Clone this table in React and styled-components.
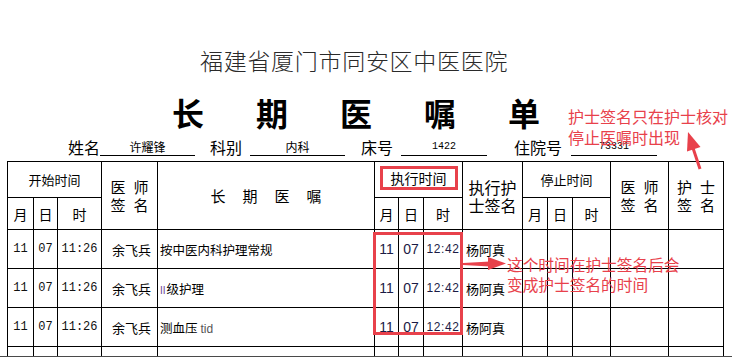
import React from 'react';
import styled, { createGlobalStyle } from 'styled-components';

const Global = createGlobalStyle`
  html, body { margin: 0; padding: 0; background: #fff; }
  body { font-family: "Noto Sans CJK SC", "Noto Sans", sans-serif; color: #000; }
`;

const RED = '#e8414b';

const Page = styled.div`
  position: relative;
  width: 732px;
  height: 357px;
  overflow: hidden;
  display: flex;
  flex-direction: column;
`;

const Hospital = styled.div`
  margin-top: 48px;
  padding-left: 200px;
  height: 24px;
  font-size: 23px;
  font-weight: 300;
  line-height: 24px;
  letter-spacing: 0.7px;
  color: #2a2a2a;
  white-space: nowrap;
`;

const MainTitle = styled.h1`
  margin: 20px 0 0;
  padding-left: 172px;
  height: 40px;
  font-size: 32px;
  line-height: 40px;
  font-weight: 700;
  letter-spacing: 52px;
  white-space: nowrap;
`;

const InfoRow = styled.div`
  margin-top: 6px;
  height: 19px;
  display: flex;
  align-items: flex-end;
  padding-left: 68px;
`;

const Label = styled.span`
  flex: none;
  width: ${p => p.$w}px;
  margin-left: ${p => p.$ml || 0}px;
  font-size: 16px;
  line-height: 19px;
  white-space: nowrap;
`;

const Field = styled.span`
  flex: none;
  box-sizing: border-box;
  width: ${p => p.$w}px;
  margin-left: ${p => p.$ml || 0}px;
  margin-bottom: 1px;
  height: 16px;
  border-bottom: 1px solid #000;
  text-align: center;
  font-family: ${p => (p.$mono ? '"Liberation Mono", monospace' : '"Noto Sans CJK SC", sans-serif')};
  font-size: ${p => (p.$mono ? 10 : 12)}px;
  line-height: 14px;
  white-space: nowrap;
`;

const TableWrap = styled.div`
  position: relative;
  margin: 4px 0 0 7px;
  width: 717px;
`;

const Sheet = styled.table`
  border-collapse: collapse;
  table-layout: fixed;
  width: 717px;
`;

const Row = styled.tr`
  height: ${p => p.$h}px;
`;

const Head = styled.th`
  border: 1px solid #000;
  padding: 0;
  font-weight: 400;
  font-size: ${p => p.$size || 14}px;
  line-height: 18px;
  text-align: center;
  vertical-align: middle;
  white-space: nowrap;
`;

const Cell = styled.td`
  border: 1px solid #000;
  border-bottom: ${p => (p.$open ? 'none' : '1px solid #000')};
  padding: 0;
  vertical-align: middle;
  white-space: nowrap;
  overflow: hidden;
`;

const Digits = styled(Cell)`
  text-align: center;
  font-family: "Liberation Mono", "DejaVu Sans Mono", monospace;
  font-size: 12px;
  color: #111;
`;

const Signer = styled(Cell)`
  text-align: right;
  padding-right: 6px;
  font-size: 13px;
`;

const Order = styled(Cell)`
  text-align: left;
  padding-left: 2px;
  font-size: 12.5px;
`;

const ExecNum = styled(Cell)`
  text-align: center;
  font-family: "Liberation Sans", Arial, sans-serif;
  font-size: ${p => (p.$small ? 12 : 14)}px;
  letter-spacing: ${p => (p.$small ? 0.6 : 0)}px;
  color: #1b1b45;
`;

const Nurse = styled(Cell)`
  text-align: left;
  padding-left: 3px;
  font-size: 13px;
`;

const Stack = styled.div`
  display: flex;
  flex-direction: column;
  align-items: center;
  letter-spacing: ${p => p.$ls || 0}px;
  padding-left: ${p => p.$ls || 0}px;
`;

const Spaced = styled.span`
  letter-spacing: ${p => p.$ls}px;
  padding-left: ${p => p.$ls}px;
`;

const BoxedLabel = styled.span`
  display: inline-block;
  box-sizing: border-box;
  width: 78px;
  height: 24px;
  margin-bottom: 4px;
  border: 3px solid ${RED};
  font-size: 14px;
  line-height: 18px;
`;

const Roman = styled.span`
  font-family: "Liberation Sans", Arial, sans-serif;
  font-size: 10px;
  color: #6a3f93;
  margin-right: 1px;
`;

const Latin = styled.span`
  font-family: "Liberation Sans", Arial, sans-serif;
  font-size: 12px;
  color: #555;
  margin-left: 3px;
`;

const RedFrame = styled.div`
  position: absolute;
  left: 366px;
  top: 71px;
  width: 90px;
  height: 103px;
  box-sizing: border-box;
  border: 3px solid ${RED};
  pointer-events: none;
`;

const BottomEdge = styled.div`
  height: 2px;
  background: #4a4a4a;
`;

const Note = styled.div`
  position: absolute;
  left: ${p => p.$x}px;
  top: ${p => p.$y}px;
  font-size: ${p => p.$size}px;
  line-height: ${p => p.$lh}px;
  color: ${RED};
  white-space: nowrap;
  pointer-events: none;
`;

const Arrows = styled.svg`
  position: absolute;
  left: 0;
  top: 0;
  pointer-events: none;
`;

const COLS = [26, 24, 44, 56, 217, 24, 25, 39, 60, 25, 25, 38, 58, 55];

const rows = [
  { order: <>按中医内科护理常规</> },
  { order: <><Roman>II</Roman>级护理</> },
  { order: <>测血压<Latin>tid</Latin></> },
];

export default function App() {
  return (
    <>
      <Global />
      <Page>
        <Hospital>福建省厦门市同安区中医医院</Hospital>
        <MainTitle>长期医嘱单</MainTitle>
        <InfoRow>
          <Label $w={32}>姓名</Label>
          <Field $w={95}>许耀锋</Field>
          <Label $w={32} $ml={15}>科别</Label>
          <Field $w={95} $ml={8}>内科</Field>
          <Label $w={32} $ml={16}>床号</Label>
          <Field $w={86} $ml={8} $mono>1422</Field>
          <Label $w={48} $ml={27}>住院号</Label>
          <Field $w={86} $ml={9} $mono>73331</Field>
        </InfoRow>
        <TableWrap>
          <Sheet>
            <colgroup>
              {COLS.map((w, i) => (
                <col key={i} style={{ width: w }} />
              ))}
            </colgroup>
            <thead>
              <Row $h={36}>
                <Head colSpan={3} $size={13}>开始时间</Head>
                <Head rowSpan={2} $size={15}>
                  <Stack $ls={8}><span>医师</span><span>签名</span></Stack>
                </Head>
                <Head rowSpan={2} $size={15}><Spaced $ls={17}>长期医嘱</Spaced></Head>
                <Head colSpan={3}><BoxedLabel>执行时间</BoxedLabel></Head>
                <Head rowSpan={2} $size={16}>
                  <Stack><span>执行护</span><span>士签名</span></Stack>
                </Head>
                <Head colSpan={3} $size={13}>停止时间</Head>
                <Head rowSpan={2} $size={15}>
                  <Stack $ls={8}><span>医师</span><span>签名</span></Stack>
                </Head>
                <Head rowSpan={2} $size={15}>
                  <Stack $ls={8}><span>护士</span><span>签名</span></Stack>
                </Head>
              </Row>
              <Row $h={32}>
                {['月', '日', '时', '月', '日', '时', '月', '日', '时'].map((t, i) => (
                  <Head key={i}>{t}</Head>
                ))}
              </Row>
            </thead>
            <tbody>
              {rows.map((r, i) => (
                <Row key={i} $h={39}>
                  <Digits>11</Digits>
                  <Digits>07</Digits>
                  <Digits>11:26</Digits>
                  <Signer>余飞兵</Signer>
                  <Order>{r.order}</Order>
                  <ExecNum>11</ExecNum>
                  <ExecNum>07</ExecNum>
                  <ExecNum $small>12:42</ExecNum>
                  <Nurse>杨阿真</Nurse>
                  <Cell />
                  <Cell />
                  <Cell />
                  <Cell />
                  <Cell />
                </Row>
              ))}
              <Row $h={9}>
                {COLS.map((_, i) => (
                  <Cell key={i} $open />
                ))}
              </Row>
            </tbody>
          </Sheet>
          <RedFrame />
        </TableWrap>
        <BottomEdge />

        <Note $x={568} $y={106} $size={16} $lh={21}>
          护士签名只在护士核对<br />停止医嘱时出现
        </Note>
        <Note $x={507} $y={255} $size={15.7} $lh={20}>
          这个时间在护士签名后会<br />变成护士签名的时间
        </Note>
        <Arrows width="732" height="357" viewBox="0 0 732 357">
          <line x1="700" y1="169" x2="693" y2="148" stroke={RED} strokeWidth="3" />
          <polygon points="688,132 700.5,147 687,151.5" fill={RED} />
          <polygon points="463,263 490,261.5 490,266.5 463,265" fill={RED} />
          <polygon points="488,257 506,263.5 488,270" fill={RED} />
        </Arrows>
      </Page>
    </>
  );
}
